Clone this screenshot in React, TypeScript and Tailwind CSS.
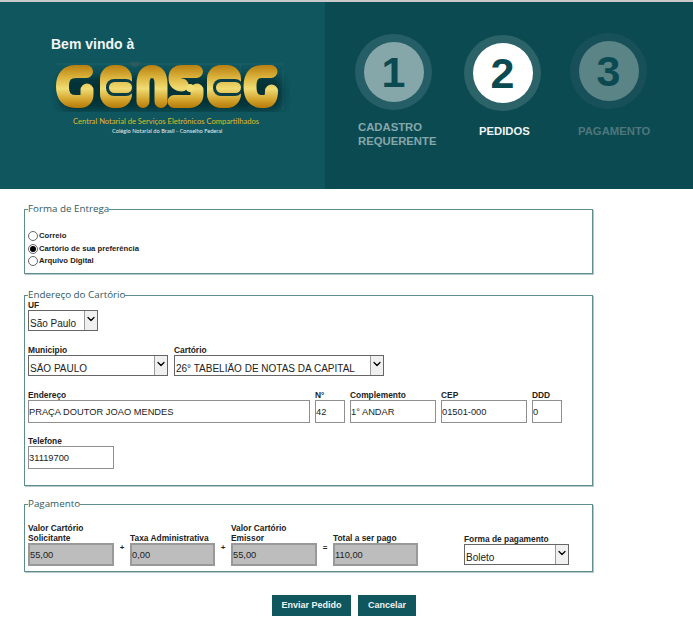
import React from 'react';
import { ChevronDown } from 'lucide-react';

const arial = "font-['Liberation_Sans',Arial,sans-serif]";

const Logo = () => (
  <svg width="240" height="50" viewBox="50 62 240 50" className="block">
    <defs>
      <linearGradient id="gold" gradientUnits="userSpaceOnUse" x1="0" y1="65" x2="0" y2="108">
        <stop offset="0" stopColor="#b87f10" />
        <stop offset="0.3" stopColor="#dcb53e" />
        <stop offset="0.55" stopColor="#f0dc74" />
        <stop offset="0.8" stopColor="#d4a52e" />
        <stop offset="1" stopColor="#b57a08" />
      </linearGradient>
      <filter id="blur" x="-10%" y="-30%" width="120%" height="170%">
        <feGaussianBlur stdDeviation="4" />
      </filter>
    </defs>
    {/* faint plan lines behind the letters */}
    <g fill="none" stroke="#3a7077" strokeWidth="0.6" opacity="0.7">
      <path d="M56 64H284M272 64V110M283 70V110M240 64V80" />
      <circle cx="135" cy="62" r="5" fill="#3a5c5f" stroke="none" />
    </g>
    <rect x="60" y="76" width="222" height="34" rx="10" fill="#06262c" opacity="0.75" filter="url(#blur)" />
    <g fill="none" stroke="url(#gold)" strokeWidth="13" strokeLinecap="round" strokeLinejoin="round">
      <path d="M86.5 71.5H76Q62.5 71.5 62.5 86.5Q62.5 101.5 76 101.5H80Q87 101.5 87 94V90" />
      <path d="M143 101.5V84Q143 71.5 152 71.5Q161 71.5 161 84V101.5" />
      <path d="M196.5 71.5H182Q175 71.5 175 78Q175 85 182 85" />
      <path d="M174 101.5H189Q197 101.5 197 94V90" />
      <path d="M271 71.5H262Q250 71.5 250 86.5Q250 101.5 262 101.5H265Q271.5 101.5 271.5 91" />
    </g>
    {/* the two E: a pill with a dark channel and an oval bar inside */}
    <rect x="100" y="65" width="32" height="43" rx="14" fill="url(#gold)" />
    <rect x="106" y="79" width="28" height="17" rx="8" fill="#0b3d44" />
    <rect x="109" y="82" width="23" height="11" rx="5.5" fill="url(#gold)" />
    <rect x="207" y="65" width="34" height="43" rx="14" fill="url(#gold)" />
    <rect x="213" y="79" width="30" height="17" rx="8" fill="#0b3d44" />
    <rect x="216" y="82" width="25" height="11" rx="5.5" fill="url(#gold)" />
    <circle cx="190" cy="88" r="4" fill="#f0dc74" />
  </svg>
);

const Step = ({ n, circle, ring, className, children }: { n: string; circle: string; ring: string; className: string; children: React.ReactNode }) => (
  <div className={`flex w-[77px] flex-col ${className}`}>
    <div className={`flex h-[76px] w-[77px] items-center justify-center rounded-full ${ring}`}>
      <div className={`flex h-[60px] w-[60px] items-center justify-center rounded-full text-[43px] leading-none font-bold text-[#0c4a52] ${circle}`}>{n}</div>
    </div>
    {children}
  </div>
);

const Label = ({ children, className = '' }: { children: React.ReactNode; className?: string }) => (
  <label className={`block text-[8.4px] leading-[9px] font-bold text-[#222] ${className}`}>{children}</label>
);

const Field = ({ value, className = '', gray = false }: { value: string; className?: string; gray?: boolean }) => (
  <input
    readOnly
    value={value}
    className={`block h-[23px] px-0 text-[9.3px] text-[#222] outline-none ${arial} ${gray ? 'border-2 border-[#999] bg-[#bdbdbd]' : 'border border-[#8f8f8f] bg-white'} ${className}`}
  />
);

const Select = ({ value, className = '' }: { value: string; className?: string }) => (
  <div className={`flex h-[21px] border border-[#666] bg-white ${className}`}>
    <span className="flex-1 self-end truncate pl-[1px] text-[10px] leading-[12px] text-[#222]">{value}</span>
    <span className="flex w-[13px] items-start justify-center border-l border-[#9a9a9a] bg-[#f0f0f0] pt-[2px] text-black">
      <ChevronDown size={12} strokeWidth={2.5} />
    </span>
  </div>
);

const Radio = ({ checked = false, label }: { checked?: boolean; label: string }) => (
  <div className="flex h-[12.5px] items-center">
    <span className="mr-[1px] flex h-[10px] w-[10px] items-center justify-center rounded-full border border-[#666] bg-white">
      {checked && <span className="h-[6px] w-[6px] rounded-full bg-black" />}
    </span>
    <span className="text-[7.7px] font-bold text-[#222]">{label}</span>
  </div>
);

const Group = ({ title, className, children }: { title: string; className: string; children: React.ReactNode }) => (
  <fieldset className={`ml-[24px] w-[569px] border border-[#5f8c8c] pr-0 pl-[3px] shadow-[1px_1px_0_#b5c9cc] ${className}`}>
    <legend className="px-0 font-['Open_Sans',Tahoma,sans-serif] text-[9.8px] leading-[10px] text-[#2f5a5e]">{title}</legend>
    {children}
  </fieldset>
);

const Sign = ({ children }: { children: React.ReactNode }) => (
  <span className="mb-[13px] text-center text-[8px] leading-[10px] font-bold text-[#222]">{children}</span>
);

export default function App() {
  return (
    <div className={`min-h-[620px] w-[693px] bg-white ${arial}`}>
      {/* banner */}
      <div className="h-[2px] bg-[#c9c9c9]" />
      <div className="flex h-[187px]">
        <div className="w-[325px] bg-[#0f565e] pt-[34px] pl-[51px]">
          <p className="text-[14px] leading-[16px] font-bold text-[#f2f5f5]">Bem vindo à</p>
          <div className="mt-[10px] -ml-[1px]">
            <Logo />
            <p className="mt-[4px] ml-[23px] whitespace-nowrap font-['Lato',sans-serif] text-[7.6px] leading-[10px] text-[#e0b92a]">Central Notarial de Serviços Eletrônicos Compartilhados</p>
            <p className="mt-[1px] ml-[62px] whitespace-nowrap font-['Lato',sans-serif] text-[5.65px] leading-[8px] text-[#e8eeee]">Colégio Notarial do Brasil - Conselho Federal</p>
          </div>
        </div>
        <div className="flex flex-1 bg-[#0c4a52] pl-[30px]">
          <Step n="1" className="mt-[32px]" ring="bg-[#255e66]" circle="bg-[#85a7aa]">
            <p className="mt-[11px] ml-[3px] w-[90px] text-[11.3px] leading-[13.5px] font-bold text-[#85a7aa]">CADASTRO REQUERENTE</p>
          </Step>
          <Step n="2" className="mt-[33px] ml-[32px]" ring="bg-[#2b6369]" circle="bg-white">
            <p className="mt-[13px] ml-[15px] text-[11.3px] leading-[14px] font-bold text-[#eef3f3]">PEDIDOS</p>
          </Step>
          <Step n="3" className="mt-[31px] ml-[29px]" ring="bg-[#175058]" circle="bg-[#5b8487]">
            <p className="mt-[15px] ml-[8px] text-[11.3px] leading-[14px] font-bold text-[#4d777c]">PAGAMENTO</p>
          </Step>
        </div>
      </div>

      {/* forms */}
      <Group title="Forma de Entrega" className="mt-[15px] h-[70px] pt-[16px]">
        <Radio label="Correio" />
        <Radio checked label="Cartório de sua preferência" />
        <Radio label="Arquivo Digital" />
      </Group>

      <Group title="Endereço do Cartório" className="mt-[16px] h-[196px]">
        <Label className="mt-[1px]">UF</Label>
        <Select value="São Paulo" className="w-[70px]" />
        <div className="mt-[15px] flex gap-[6px]">
          <div>
            <Label>Municipio</Label>
            <Select value="SÃO PAULO" className="w-[140px]" />
          </div>
          <div>
            <Label>Cartório</Label>
            <Select value="26° TABELIÃO DE NOTAS DA CAPITAL" className="w-[210px]" />
          </div>
        </div>
        <div className="mt-[15px] flex gap-[5px]">
          <div>
            <Label>Endereço</Label>
            <Field value="PRAÇA DOUTOR JOAO MENDES" className="w-[282px]" />
          </div>
          <div>
            <Label>N°</Label>
            <Field value="42" className="w-[30px]" />
          </div>
          <div>
            <Label>Complemento</Label>
            <Field value="1° ANDAR" className="w-[86px]" />
          </div>
          <div>
            <Label>CEP</Label>
            <Field value="01501-000" className="w-[86px]" />
          </div>
          <div>
            <Label>DDD</Label>
            <Field value="0" className="w-[30px]" />
          </div>
        </div>
        <Label className="mt-[14px]">Telefone</Label>
        <Field value="31119700" className="w-[86px]" />
      </Group>

      <Group title="Pagamento" className="mt-[13px] h-[73px]">
        <div className="mt-[14px] flex items-end">
          <div className="w-[86px]">
            <Label className="leading-[10px]">Valor Cartório Solicitante</Label>
            <Field gray value="55,00" className="w-[86px]" />
          </div>
          <div className="flex w-[16px] justify-center"><Sign>+</Sign></div>
          <div className="w-[85px]">
            <Label className="leading-[10px]">Taxa Administrativa</Label>
            <Field gray value="0,00" className="w-[85px]" />
          </div>
          <div className="flex w-[16px] justify-center"><Sign>+</Sign></div>
          <div className="w-[86px]">
            <Label className="leading-[10px]">Valor Cartório Emissor</Label>
            <Field gray value="55,00" className="w-[86px]" />
          </div>
          <div className="flex w-[16px] justify-center"><Sign>=</Sign></div>
          <div className="w-[85px]">
            <Label className="leading-[10px]">Total a ser pago</Label>
            <Field gray value="110,00" className="w-[85px]" />
          </div>
          <div className="mb-[1px] ml-[46px] w-[105px]">
            <Label className="leading-[10px]">Forma de pagamento</Label>
            <Select value="Boleto" className="w-[105px]" />
          </div>
        </div>
      </Group>

      <div className="mt-[23px] ml-[272px] flex gap-[7px]">
        <button className="h-[21px] w-[79px] bg-[#0f565e] text-[9px] font-bold text-[#eef3f3]">Enviar Pedido</button>
        <button className="h-[21px] w-[58px] bg-[#0f565e] text-[9px] font-bold text-[#eef3f3]">Cancelar</button>
      </div>
    </div>
  );
}
